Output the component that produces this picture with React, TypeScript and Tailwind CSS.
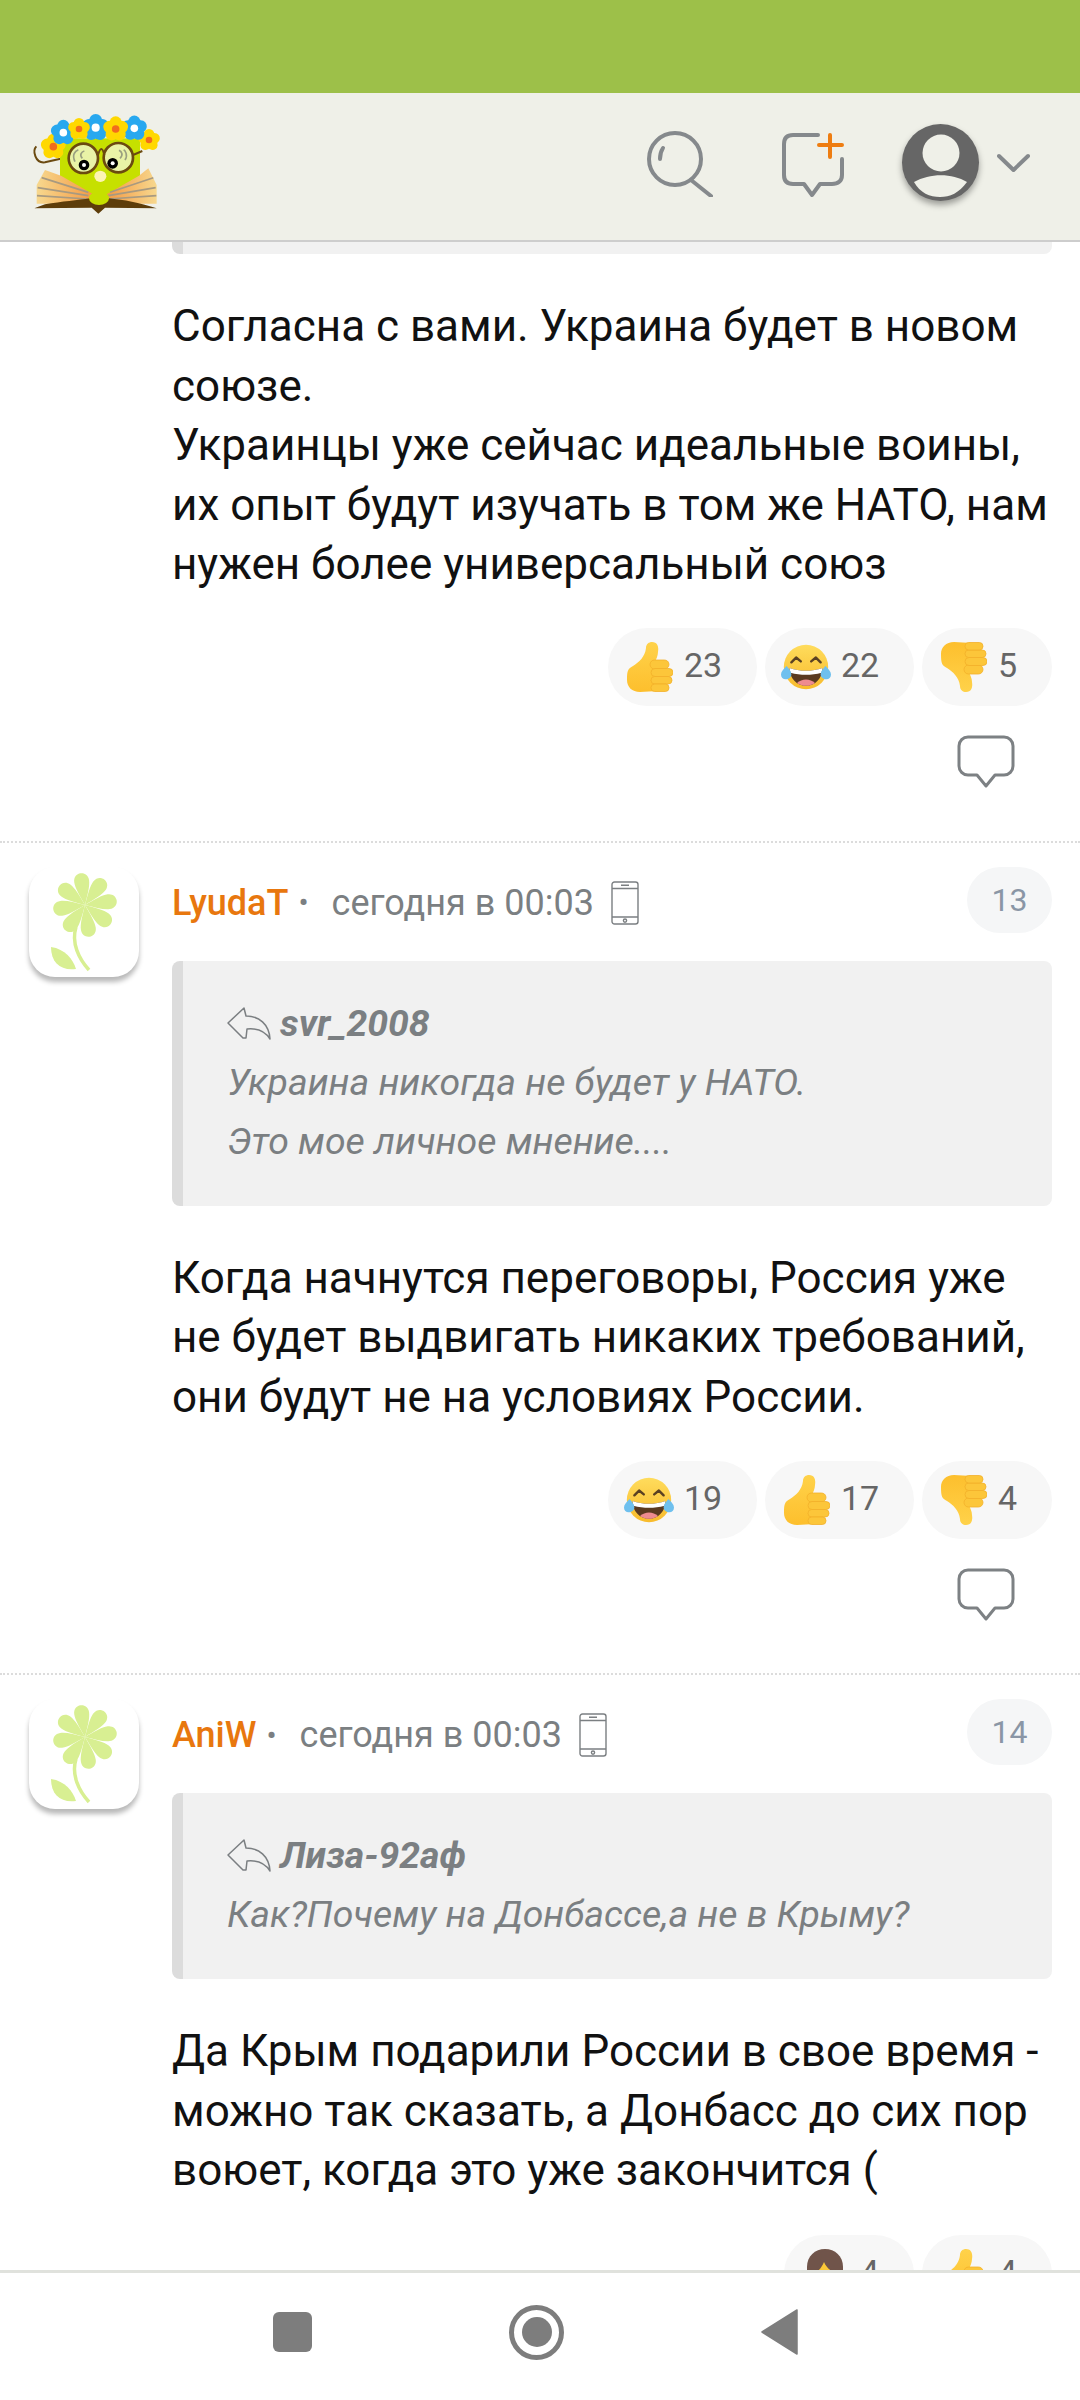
const roboto = "font-['Roboto',sans-serif]";

function ThumbShape() {
  return (
    <>
      <path d="M1 38 C1 28 2 27 7 24 C13 20 19 15 20 6 C20 2 23 0 26 0 C31 0 33 4 32 10 C32 14 30 17 29 20 L32 49 L14 50 C6 50 1 45 1 38 Z" fill="url(#thumbFill)" />
      <rect x="24" y="18" width="19" height="9" rx="4.5" fill="#fcc63a" stroke="#f3b02a" strokeWidth="0.8" />
      <rect x="25" y="26.5" width="22" height="8" rx="4" fill="#fcc63a" stroke="#f3b02a" strokeWidth="0.8" />
      <rect x="25" y="34.5" width="21" height="7.5" rx="3.7" fill="#fcc63a" stroke="#f3b02a" strokeWidth="0.8" />
      <rect x="25" y="42" width="18" height="7.5" rx="3.7" fill="#fcc63a" stroke="#f3b02a" strokeWidth="0.8" />
    </>
  );
}

function ThumbUp() {
  return (
    <svg className="w-[47px] h-[50px]" viewBox="0 0 47 50">
      <defs>
        <linearGradient id="thumbFill" x1="0" y1="0" x2="0" y2="1">
          <stop offset="0" stopColor="#ffd24a" />
          <stop offset="1" stopColor="#fdbf2d" />
        </linearGradient>
      </defs>
      <ThumbShape />
    </svg>
  );
}

function ThumbDown() {
  return (
    <svg className="w-[47px] h-[50px]" viewBox="0 0 47 50">
      <defs>
        <linearGradient id="thumbFill" x1="0" y1="0" x2="0" y2="1">
          <stop offset="0" stopColor="#ffd24a" />
          <stop offset="1" stopColor="#fdbf2d" />
        </linearGradient>
      </defs>
      <g transform="translate(0 50) scale(1 -1)">
        <ThumbShape />
      </g>
    </svg>
  );
}

function LaughEmoji() {
  return (
    <svg className="w-[53px] h-[48px]" viewBox="0 0 53 48">
      <defs>
        <linearGradient id="faceFill" x1="0" y1="0" x2="0" y2="1">
          <stop offset="0" stopColor="#ffdc5c" />
          <stop offset="1" stopColor="#f8bb2c" />
        </linearGradient>
      </defs>
      <circle cx="26.5" cy="24" r="23.5" fill="url(#faceFill)" />
      <path d="M11 19 L16 14 L21 18 M32 18 L37 14 L42 19" fill="none" stroke="#5b4122" strokeWidth="2.6" strokeLinecap="round" strokeLinejoin="round" />
      <path d="M9 25 C20 29 33 29 44 25 C44 36 36 44 26.5 44 C17 44 9 36 9 25 Z" fill="#5b3a20" />
      <path d="M9 25 C20 29 33 29 44 25 L43 30 C32 33 21 33 10 30 Z" fill="#fff" />
      <path d="M17 41 C22 36 31 36 36 41 C31 45 22 45 17 41 Z" fill="#ee8b8f" />
      <path d="M6 23 C9 27 11 29 11 32 C11 35 8 37 5 37 C2 37 0 35 0 32 C0 29 3 26 6 23 Z" fill="#6fc0ee" />
      <path d="M47 23 C44 27 42 29 42 32 C42 35 45 37 48 37 C51 37 53 35 53 32 C53 29 50 26 47 23 Z" fill="#6fc0ee" />
    </svg>
  );
}

function WomanEmoji() {
  return (
    <svg className="w-[36px] h-[50px]" viewBox="0 0 36 50">
      <path d="M0 18 C0 7 8 0 18 0 C28 0 36 7 36 18 L36 50 L0 50 Z" fill="#70544a" />
      <path d="M4 25 C10 24 14 20 17 13 C20 20 26 24 32 24 C32 36 26 42 18 42 C10 42 4 36 4 25 Z" fill="#fbc838" />
      <circle cx="12" cy="29" r="1.6" fill="#5b4122" />
      <circle cx="24" cy="29" r="1.6" fill="#5b4122" />
    </svg>
  );
}

const emojis = {
  up: <ThumbUp />,
  down: <ThumbDown />,
  laugh: <LaughEmoji />,
  woman: <WomanEmoji />,
};

type Reaction = { kind: keyof typeof emojis; count: number };

function Pill({ kind, count, width }: Reaction & { width: string }) {
  return (
    <div className={`${width} h-[78px] shrink-0 rounded-full bg-[#f7f7f7] flex items-center pl-[16px] gap-[10px]`}>
      <span className="flex items-center justify-center w-[50px] shrink-0">{emojis[kind]}</span>
      <span className="text-[34px] leading-none text-[#666666] pb-[4px]">{count}</span>
    </div>
  );
}

function BubbleIcon() {
  return (
    <svg className="w-[58px] h-[53px]" viewBox="0 0 58 53" fill="none">
      <path
        d="M11 2 H47 C52 2 56 6 56 11 V31 C56 36 52 40 47 40 H38 L29 51 L20 40 H11 C6 40 2 36 2 31 V11 C2 6 6 2 11 2 Z"
        stroke="#7d8184"
        strokeWidth="3"
        strokeLinejoin="round"
      />
    </svg>
  );
}

function Flower() {
  const petals = [-8, 37, 82, 127, 172, 217, 262, 307];
  return (
    <svg className="w-[110px] h-[110px]" viewBox="0 0 110 110">
      {petals.map((a) => (
        <path
          key={a}
          d="M56 38 C52 28 48.5 20 48.5 14 C48.5 9 52 6 56 6 C60 6 63.5 9 63.5 14 C63.5 20 60 28 56 38 Z"
          fill="#d8ef92"
          transform={`rotate(${a} 56 38)`}
        />
      ))}
      <path d="M47 60 C42 76 50 92 60 103" fill="none" stroke="#d8ef92" strokeWidth="3.5" />
      <path d="M22 80 C36 82 44 92 47 102 C32 104 22 96 22 80 Z" fill="#d8ef92" />
    </svg>
  );
}

function PhoneIcon() {
  return (
    <svg className="w-[28px] h-[44px] shrink-0" viewBox="0 0 28 44" fill="none" stroke="#7b7f82" strokeWidth="1.4">
      <rect x="1" y="1" width="26" height="42" rx="2.5" />
      <path d="M1 7.5 H27 M1 36 H27 M10 4.2 H18" />
      <circle cx="14" cy="39.6" r="1.6" />
    </svg>
  );
}

function ReplyIcon() {
  return (
    <svg className="w-[44px] h-[33px] shrink-0" viewBox="0 0 44 33" fill="none" stroke="#7b7f82" strokeWidth="1.5" strokeLinejoin="round">
      <path d="M1 16 L17 1 L19 9 C32 9 42 17 43 32 C38 24 30 21 20 22 L19 31 L16 31 Z" />
    </svg>
  );
}

type CommentData = {
  name: string;
  date: string;
  num: number;
  replyTo: string;
  quote: string[];
  text: string[];
  reactions: Reaction[];
  hasBubble: boolean;
};

const comments: CommentData[] = [
  {
    name: "LyudaT",
    date: "сегодня в 00:03",
    num: 13,
    replyTo: "svr_2008",
    quote: ["Украина никогда не будет у НАТО.", "Это мое личное мнение...."],
    text: ["Когда начнутся переговоры, Россия уже", "не будет выдвигать никаких требований,", "они будут не на условиях России."],
    reactions: [
      { kind: "laugh", count: 19 },
      { kind: "up", count: 17 },
      { kind: "down", count: 4 },
    ],
    hasBubble: true,
  },
  {
    name: "AniW",
    date: "сегодня в 00:03",
    num: 14,
    replyTo: "Лиза-92аф",
    quote: ["Как?Почему на Донбассе,а не в Крыму?"],
    text: ["Да Крым подарили России в свое время -", "можно так сказать, а Донбасс до сих пор", "воюет, когда это уже закончится ("],
    reactions: [
      { kind: "woman", count: 4 },
      { kind: "up", count: 4 },
    ],
    hasBubble: false,
  },
];

function Reactions({ items, top }: { items: Reaction[]; top: string }) {
  return (
    <div className={`flex justify-end gap-[8px] ${top}`}>
      {items.map((r, i) => (
        <Pill key={i} {...r} width={r.count < 10 ? "w-[130px]" : "w-[149px]"} />
      ))}
    </div>
  );
}

function Comment({ c }: { c: CommentData }) {
  return (
    <article className="border-t-2 border-dotted border-[#dcdcdc] pt-[24px] pl-[29px] pr-[28px] flex gap-[33px]">
      <div className="w-[110px] h-[110px] shrink-0 rounded-[26px] bg-white shadow-[0_5px_5px_rgba(0,0,0,0.28)] overflow-hidden">
        <Flower />
      </div>
      <div className="flex-1 min-w-0">
        <div className="flex items-center h-[66px]">
          <div className="flex items-center pt-[6px]">
            <span className="text-[36px] font-medium text-[#e8770e]">{c.name}</span>
            <span className="ml-[10px] mr-[21px] text-[30px] text-[#7b7f82]">•</span>
            <span className="text-[36px] text-[#7b7f82] mr-[17px] ml-[2px]">{c.date}</span>
            <PhoneIcon />
          </div>
          <span className="ml-auto w-[85px] h-[66px] rounded-full bg-[#f5f6f7] flex items-center justify-center text-[32px] text-[#8a96a6]">{c.num}</span>
        </div>
        <div className="mt-[28px] bg-[#f1f1f1] border-l-[11px] border-[#dcdcdc] rounded-[8px] pl-[44px] pt-[33px] pb-[35px] text-[37.4px] leading-[59px] italic text-[#7b7f82]">
          <div className="flex items-center gap-[9px] font-bold">
            <ReplyIcon />
            <span>{c.replyTo}</span>
          </div>
          {c.quote.map((q) => (
            <div key={q}>{q}</div>
          ))}
        </div>
        <div className="mt-[43px] text-[44px] leading-[59.5px] text-[#111111]">
          {c.text.map((l) => (
            <div key={l} className="whitespace-nowrap">{l}</div>
          ))}
        </div>
        <Reactions items={c.reactions} top="mt-[34px]" />
        {c.hasBubble && (
          <div className="flex justify-end mt-[29px] pr-[37px] pb-[52px]">
            <BubbleIcon />
          </div>
        )}
      </div>
    </article>
  );
}

function LogoFlower({ x, y, color, core, r = 26 }: { x: number; y: number; color: string; core: string; r?: number }) {
  return (
    <g transform={`translate(${x} ${y})`}>
      {[0, 72, 144, 216, 288].map((a) => (
        <ellipse key={a} cx="0" cy={-r * 0.62} rx={r * 0.62} ry={r * 0.66} fill={color} transform={`rotate(${a})`} />
      ))}
      <circle r={r * 0.38} fill={core} />
    </g>
  );
}

function Logo() {
  return (
    <svg className="w-[140px] h-[110px]" viewBox="0 0 420 330">
      <defs>
        <linearGradient id="pageFillL" x1="0" y1="0" x2="1" y2="0">
          <stop offset="0" stopColor="#f7d88e" />
          <stop offset="1" stopColor="#f49a44" />
        </linearGradient>
        <linearGradient id="pageFillR" x1="1" y1="0" x2="0" y2="0">
          <stop offset="0" stopColor="#f7d88e" />
          <stop offset="1" stopColor="#f49a44" />
        </linearGradient>
      </defs>
      <path d="M34 124 C22 136 30 176 60 172 L120 158" fill="none" stroke="#6b4a10" strokeWidth="6" />
      <rect x="105" y="100" width="240" height="170" fill="#c6e000" />
      <circle cx="175" cy="160" r="44" fill="#e9f3a6" stroke="#6b4a10" strokeWidth="8" />
      <circle cx="280" cy="158" r="44" fill="#e9f3a6" stroke="#6b4a10" strokeWidth="8" />
      <path d="M219 150 C226 126 232 126 238 150 M324 150 L352 138" fill="none" stroke="#6b4a10" strokeWidth="6" />
      <path d="M150 170 C140 150 150 138 160 134 M172 160 C162 150 170 140 178 138" fill="none" stroke="#9aa080" strokeWidth="5" />
      <path d="M285 160 C296 150 290 140 282 136 M300 165 C310 150 300 136 296 134" fill="none" stroke="#9aa080" strokeWidth="5" />
      <circle cx="177" cy="180" r="16" fill="#000" />
      <circle cx="177" cy="180" r="6" fill="#fff" />
      <circle cx="263" cy="175" r="16" fill="#000" />
      <circle cx="263" cy="175" r="6" fill="#fff" />
      <ellipse cx="226" cy="214" rx="18" ry="17" fill="#fdf4b4" />
      <path d="M35 240 L60 195 L108 212 L205 268 L205 296 L35 296 Z" fill="url(#pageFillL)" />
      <path d="M395 240 L370 190 L342 212 L245 268 L245 296 L395 296 Z" fill="url(#pageFillR)" />
      <g stroke="#a89a80" strokeWidth="5">
        <path d="M50 218 L190 262 M38 248 L190 272 M36 272 L188 282" />
        <path d="M385 218 L255 262 M392 248 L250 272 M394 272 L250 282" />
      </g>
      <path d="M28 310 L60 298 C110 290 160 285 195 280 L250 280 C300 285 340 292 395 310 L240 308 L220 326 L200 308 Z" fill="#5d3d0a" />
      <ellipse cx="222" cy="280" rx="30" ry="20" fill="#c6e000" />
      <LogoFlower x={85} y={125} color="#ffd800" core="#f26b1d" r={30} />
      <LogoFlower x={372} y={105} color="#ffd800" core="#f26b1d" r={26} />
      <LogoFlower x={115} y={83} color="#28a8ef" core="#fff" r={30} />
      <LogoFlower x={212} y={68} color="#28a8ef" core="#fff" r={32} />
      <LogoFlower x={328} y={70} color="#28a8ef" core="#fff" r={30} />
      <LogoFlower x={162} y={72} color="#ffd800" core="#f26b1d" r={26} />
      <LogoFlower x={272} y={72} color="#ffd800" core="#f26b1d" r={30} />
    </svg>
  );
}

export default function App() {
  return (
    <div className={`${roboto} w-[1080px] h-[2400px] flex flex-col overflow-hidden bg-white`}>
      <div className="h-[93px] shrink-0 bg-[#9dc049]" />

      <header className="h-[149px] shrink-0 bg-[#eff0e8] border-b-2 border-[#cdcdcd] flex items-start pt-[12px] pl-[25px]">
        <Logo />
        <svg className="ml-[482px] mt-[26px] w-[66px] h-[66px]" viewBox="0 0 66 66" fill="none" stroke="#85898c" strokeWidth="4" strokeLinecap="round">
          <circle cx="28" cy="28" r="26" />
          <path d="M44 49 L64 65" />
          <path d="M13 28 C13 22 14 20 16 17" />
        </svg>
        <svg className="ml-[69px] mt-[28px] w-[62px] h-[64px]" viewBox="0 0 62 64" fill="none" stroke="#85898c" strokeWidth="4" strokeLinecap="round" strokeLinejoin="round">
          <path d="M36 2 H11 C5 2 2 5 2 11 V42 C2 48 5 51 11 51 H22 L30 62 L38 51 H50 C56 51 60 48 60 42 V26" />
          <path d="M37 12 H60 M48 2 V24" stroke="#ee7d11" />
        </svg>
        <div className="ml-[58px] mt-[19px] w-[77px] h-[77px] rounded-full bg-[#666666] shadow-[0_4px_6px_rgba(0,0,0,0.35)] overflow-hidden">
          <svg className="w-[77px] h-[77px]" viewBox="0 0 77 77">
            <circle cx="39" cy="29" r="18.5" fill="#eff0e8" />
            <path d="M12 58 C28 49 50 49 65 58 C57 69 48 73 38 73 C28 73 18 69 12 58 Z" fill="#eff0e8" />
          </svg>
        </div>
        <svg className="ml-[18px] mt-[48px] w-[33px] h-[20px]" viewBox="0 0 33 20" fill="none" stroke="#85898c" strokeWidth="4" strokeLinecap="round" strokeLinejoin="round">
          <path d="M2 3 L16.5 17 L31 3" />
        </svg>
      </header>

      <main className="flex-1 min-h-0 overflow-hidden">
        <div className="pl-[172px] pr-[28px]">
          <div className="h-[12px] bg-[#f1f1f1] border-l-[11px] border-[#dcdcdc] rounded-b-[8px]" />
          <div className="mt-[43px] text-[44px] leading-[59.5px] text-[#111111]">
            <div>Согласна с вами. Украина будет в новом союзе.</div>
            <div>Украинцы уже сейчас идеальные воины,</div>
            <div>их опыт будут изучать в том же НАТО, нам</div>
            <div>нужен более универсальный союз</div>
          </div>
          <Reactions
            top="mt-[33px]"
            items={[
              { kind: "up", count: 23 },
              { kind: "laugh", count: 22 },
              { kind: "down", count: 5 },
            ]}
          />
          <div className="flex justify-end mt-[29px] pr-[37px] pb-[53px]">
            <BubbleIcon />
          </div>
        </div>
        {comments.map((c) => (
          <Comment key={c.num} c={c} />
        ))}
      </main>

      <nav className="h-[130px] shrink-0 bg-white border-t-[3px] border-[#e0e2dd] flex items-center pl-[273px] pb-[9px] gap-[197px]">
        <div className="w-[39px] h-[40px] rounded-[6px] bg-[#7d7d7d]" />
        <div className="w-[55px] h-[55px] rounded-full border-[5px] border-[#7d7d7d] flex items-center justify-center">
          <div className="w-[30px] h-[30px] rounded-full bg-[#7d7d7d]" />
        </div>
        <svg className="w-[37px] h-[46px]" viewBox="0 0 37 46">
          <path d="M36 1 V45 L1 23 Z" fill="#7d7d7d" stroke="#7d7d7d" strokeWidth="1.5" strokeLinejoin="round" />
        </svg>
      </nav>
    </div>
  );
}
